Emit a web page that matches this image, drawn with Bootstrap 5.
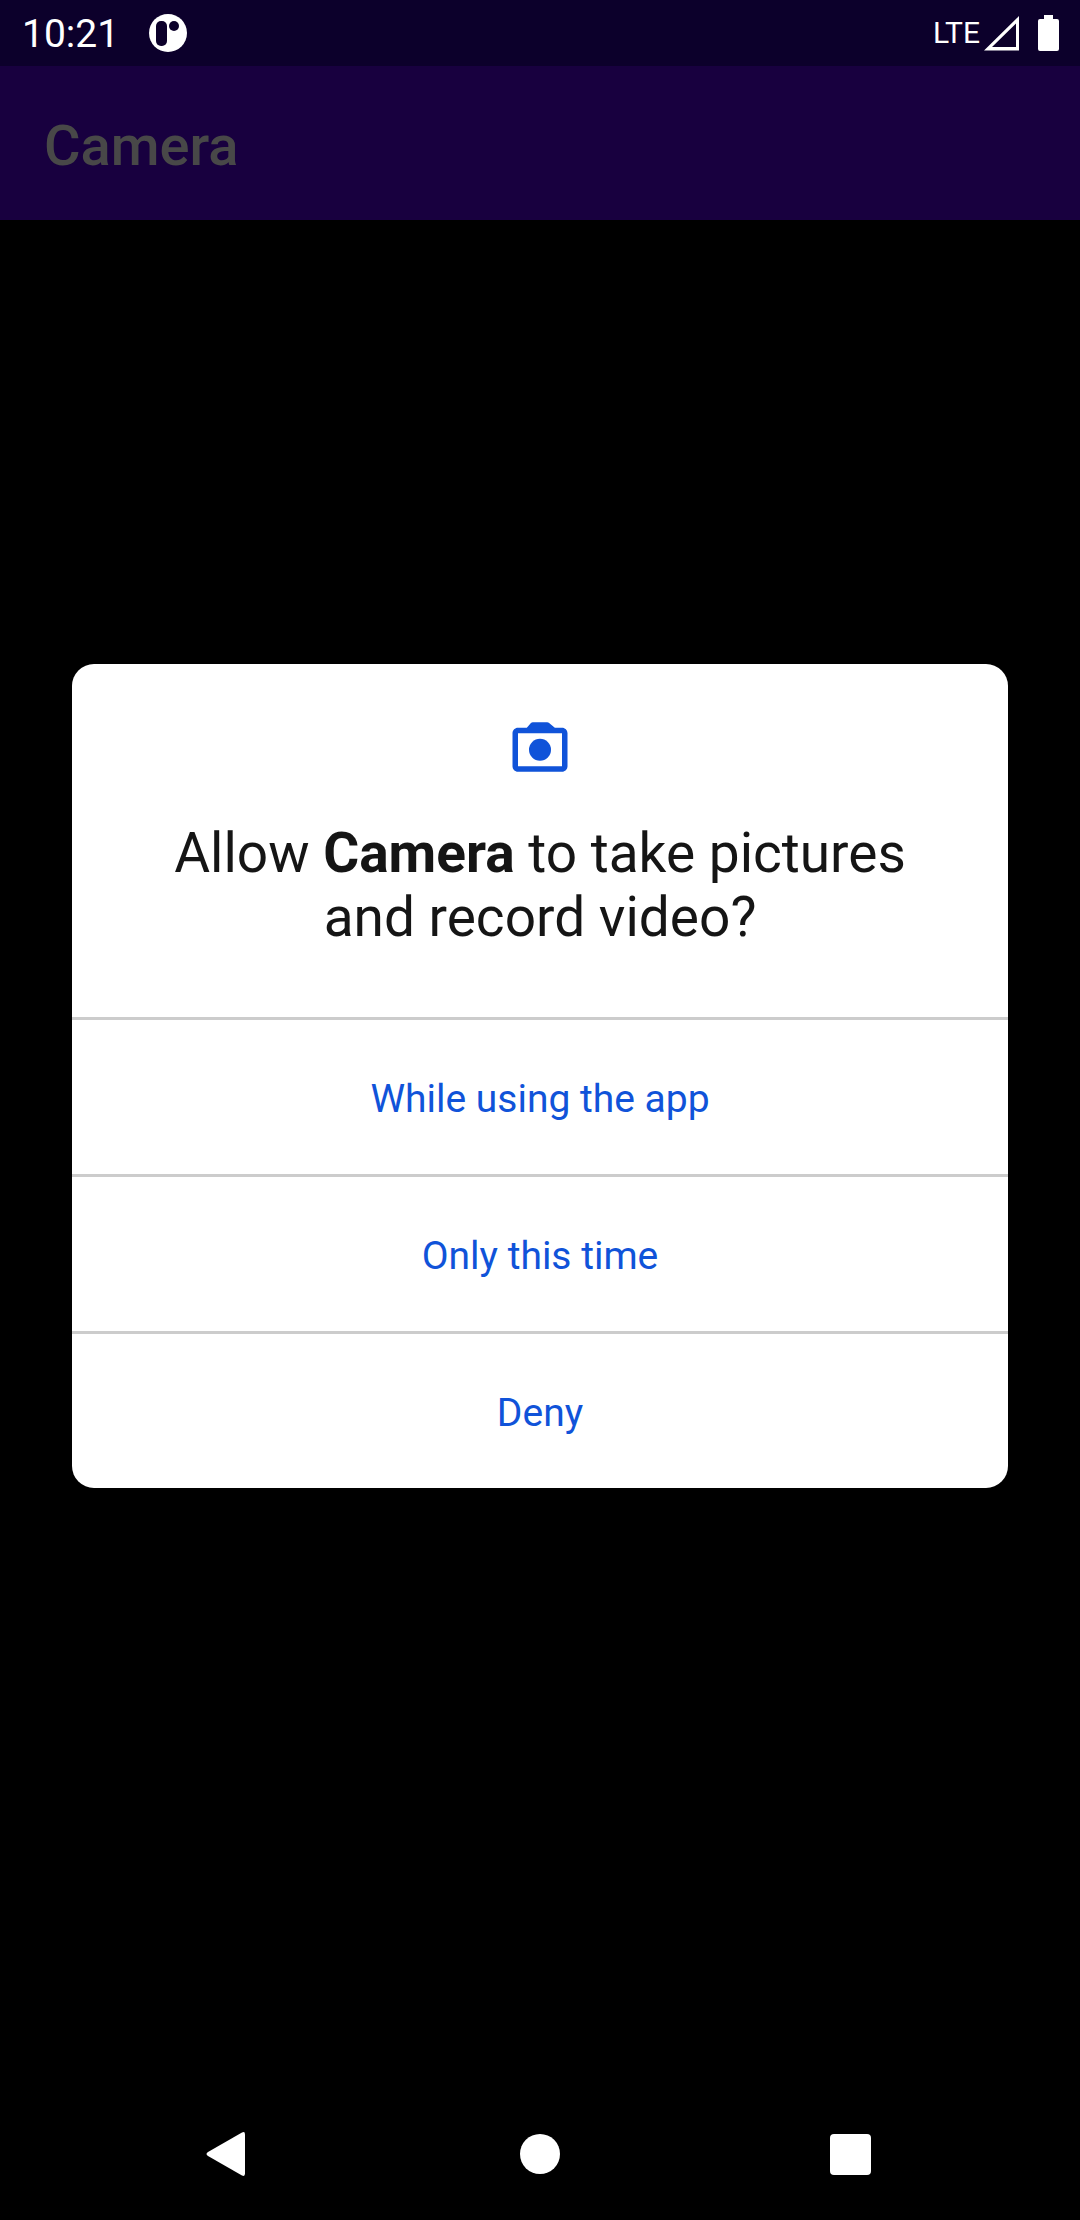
<!DOCTYPE html>
<html lang="en">
<head>
<meta charset="utf-8">
<meta name="viewport" content="width=device-width, initial-scale=1">
<title>Camera</title>
<link href="https://cdn.jsdelivr.net/npm/bootstrap@5.3.0/dist/css/bootstrap.min.css" rel="stylesheet">
<style>
  body { font-family: Roboto, "Noto Sans", sans-serif; background: #000; }
  svg { display: block; flex: none; }
  .status-bar { height: 66px; padding: 0 20px 0 22px; background: #0c002b; color: #fff; }
  .clock { font-size: 39px; line-height: 46px; padding-top: 2px; }
  .network { font-size: 30px; line-height: 46px; }
  .app-bar { height: 154px; padding: 6px 44px 0; background: #18003f; color: #484848; }
  .app-title { font-size: 56px; line-height: 64px; font-weight: 500; }
  .scrim { padding: 0 72px 2px; }
  .permission { border-radius: 22px; background: #fff; color: #151515; }
  .permission-head { padding: 50px 88px 68px; gap: 41px; }
  .permission-text { font-size: 55px; line-height: 64px; }
  .choice { height: 157px; padding: 10px 12px 6px; border: 0; border-top: 3px solid #ccc; border-radius: 0; color: #1053d9; font-size: 39px; line-height: 46px; }
  .choice:hover { color: #1053d9; background: #f1f5fd; }
  .nav-keys { height: 132px; padding: 0 75px; }
  .nav-key { border: 0; padding: 0; }
</style>
<script src="https://cdn.jsdelivr.net/npm/bootstrap@5.3.0/dist/js/bootstrap.bundle.min.js"></script>
</head>
<body>
<div class="d-flex flex-column min-vh-100">
  <div class="status-bar d-flex align-items-center justify-content-between">
    <div class="d-flex align-items-center gap-4">
      <span class="clock">10:21</span>
      <svg width="50" height="38" viewBox="0 0 50 38" aria-hidden="true">
        <circle cx="25" cy="19" r="19" fill="#fff"/>
        <rect x="13" y="7" width="11" height="25" rx="5" fill="#0c002b"/>
        <circle cx="31" cy="12" r="5" fill="#0c002b"/>
      </svg>
    </div>
    <div class="d-flex align-items-center">
      <span class="network me-1">LTE</span>
      <svg width="36" height="36" viewBox="0 0 36 36" aria-hidden="true"><path fill="#fff" fill-rule="evenodd" d="M0 35.500 35 1V35.500ZM8 32H32V8.500Z"/></svg>
      <svg class="ms-3" width="24" height="36" viewBox="0 0 24 36" aria-hidden="true"><path fill="#fff" d="M8 0h9v4h4q2 0 2 2v28q0 2-2 2H4q-2 0-2-2V6q0-2 2-2h4z"/></svg>
    </div>
  </div>

  <main class="position-relative flex-grow-1">
    <header class="app-bar d-flex align-items-center">
      <h1 class="app-title m-0">Camera</h1>
    </header>

    <div class="scrim position-absolute top-0 start-0 w-100 h-100 d-flex align-items-center">
      <section class="permission w-100 overflow-hidden" role="dialog" aria-labelledby="permission-text">
        <div class="permission-head d-flex flex-column align-items-center">
          <svg width="66" height="66" viewBox="0 0 24 24" aria-hidden="true">
            <path fill="#1053d9" fill-rule="evenodd" d="M20 5h-2.600L15.200 3.200Q15 3 14.600 3H9.400Q9 3 8.700 3.300L7.200 5H4c-1.100 0-2 .900-2 2v12c0 1.100.900 2 2 2h16c1.100 0 2-.900 2-2V7c0-1.100-.900-2-2-2zM4 7H20V19H4z"/>
            <circle cx="12" cy="13" r="4" fill="#1053d9"/>
          </svg>
          <p id="permission-text" class="permission-text text-center m-0">Allow <b>Camera</b> to take pictures and record video?</p>
        </div>
        <div class="d-flex flex-column">
          <button type="button" class="choice btn">While using the app</button>
          <button type="button" class="choice btn">Only this time</button>
          <button type="button" class="choice btn">Deny</button>
        </div>
      </section>
    </div>
  </main>

  <nav class="nav-keys d-flex" aria-label="System">
    <button type="button" class="nav-key btn flex-fill d-flex align-items-center justify-content-center" aria-label="Back">
      <svg width="48" height="48" viewBox="0 0 48 48"><path fill="#fff" d="M2 22 36 2.500Q39 1 39 4.500V43.500Q39 47 36 45.500L2 26Q-1 24 2 22Z"/></svg>
    </button>
    <button type="button" class="nav-key btn flex-fill d-flex align-items-center justify-content-center" aria-label="Home">
      <svg width="48" height="48" viewBox="0 0 48 48"><circle cx="24" cy="24" r="20" fill="#fff"/></svg>
    </button>
    <button type="button" class="nav-key btn flex-fill d-flex align-items-center justify-content-center" aria-label="Recent apps">
      <svg width="48" height="48" viewBox="0 0 48 48"><rect x="4" y="4" width="41" height="41" rx="4" fill="#fff"/></svg>
    </button>
  </nav>
</div>
</body>
</html>
